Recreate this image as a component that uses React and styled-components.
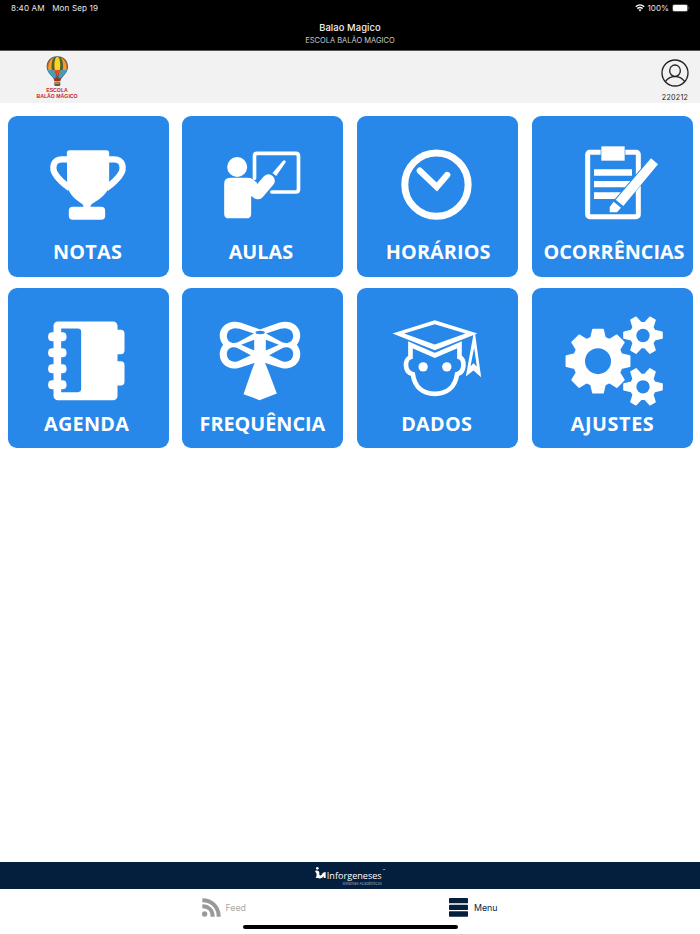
import styled, { createGlobalStyle } from "styled-components";

const BLUE = "#2788e9";
const NAVY = "#041e3e";

const gearPath = (cx, cy, teeth, outer, body, tip, base) => {
    const points = [];
    for (let i = 0; i < teeth; i++) {
        const a = (i * 2 * Math.PI) / teeth;
        [[body, -base], [outer, -tip], [outer, tip], [body, base]].forEach(([r, half]) => {
            const t = a + Math.asin(half / r);
            points.push(`${(cx + r * Math.cos(t)).toFixed(1)} ${(cy + r * Math.sin(t)).toFixed(1)}`);
        });
    }
    return "M" + points.join("L") + "Z";
};

const Trophy = () => (
    <>
        <path d="M199 130Q199 122 207 122H318Q326 122 326 130V232C314 262 289 272 274 283Q269 287 270 294H249Q250 287 245 283C228 271 212 262 200 232Z" />
        <rect x="205" y="291" width="109" height="39" rx="12" />
        <path className="line" strokeWidth="19" d="M205 149H184C157 149 152 178 167 197Q178 213 208 236" />
        <path className="line" strokeWidth="19" d="M320 149H341C368 149 373 178 358 197Q347 213 317 236" />
    </>
);

const Teacher = () => (
    <>
        <circle cx="188" cy="172" r="30" />
        <path d="M149 222Q149 204 167 204H218Q228 204 234 208L248 220L230 262V312Q230 326 216 326H163Q149 326 149 312Z" />
        <path className="line" strokeWidth="38" strokeLinejoin="round" strokeLinecap="round" d="M224 230L250 250L282 213" />
        <path className="line" strokeWidth="11" strokeLinecap="round" d="M240 206V139Q240 131 248 131H364Q372 131 372 139V239Q372 247 364 247H292" />
        <path d="M294 190L325 154Q330 150 333 154Q335 157 332 160L305 199Z" />
    </>
);

const Clock = () => (
    <>
        <circle className="line" strokeWidth="21" cx="260" cy="225" r="95" />
        <path className="line" strokeWidth="19" strokeLinecap="round" d="M210 183L261 232L292 196" />
    </>
);

const Clipboard = () => (
    <>
        <rect className="line" strokeWidth="15" x="188" y="128" width="152" height="193" rx="6" />
        <rect x="227" y="108" width="74" height="47" fill={BLUE} />
        <rect x="229" y="110" width="70" height="43" />
        <path d="M207 179H321V198H207ZM207 214H316V233H207ZM207 248H290V268H207Z" />
        <path d="M378 146L399 164L287 293L277 309L253 309L254 291Z" fill={BLUE} stroke={BLUE} strokeWidth="6" />
        <path d="M378 146L399 164L295 289L272 270Z" />
        <path d="M266 276L288 294L276 308H254V292Z" />
    </>
);

const Notebook = () => (
    <>
        <rect x="159" y="117" width="192" height="236" rx="13" />
        <path d="M340 142H361Q372 142 372 154V203Q372 215 361 215H340ZM340 236H361Q372 236 372 248V297Q372 309 361 309H340Z" />
        <path d="M182 138H232Q242 138 242 148V319Q242 329 232 329H182Z" fill={BLUE} />
        {[149, 197, 245, 293].map((y) => (
            <rect key={y} x="143" y={y} width="55" height="27" rx="12" />
        ))}
    </>
);

const Wings = () => (
    <>
        <path d="M257 141L200 121C150 104 118 152 146 187C118 223 150 272 200 254L257 236Z" />
        <path fill={BLUE} d="M238 153L195 139C171 132 157 145 157 161C158 177 173 186 190 179Z" />
        <path fill={BLUE} d="M200 187L239 172V204Z" />
        <path fill={BLUE} d="M229 218L190 197C172 190 157 199 157 214C157 231 171 242 190 236Z" />
    </>
);

const Dragonfly = () => (
    <>
        <Wings />
        <g transform="translate(513 0) scale(-1 1)">
            <Wings />
        </g>
        <path d="M243 235H269L280 262L307 333L255 353L207 335L233 260Z" />
        <ellipse cx="257" cy="150" rx="14" ry="5" fill={BLUE} />
    </>
);

const Graduate = () => (
    <>
        <path fillRule="evenodd" d="M128 153L255 113L383 153L255 203ZM163 153L255 186L347 153L255 125Z" />
        <path className="line" strokeWidth="14" d="M182 187L255 219L329 187V224C346 231 346 269 322 275C316 315 290 334 255 334C220 334 195 315 189 275C163 269 163 231 182 224Z" />
        <circle cx="220" cy="253" r="14" />
        <circle cx="291" cy="253" r="14" />
        <path fillRule="evenodd" d="M371 155H376L394 284L371 264L348 282ZM373 196L362 252L371 242L381 252Z" />
    </>
);

const Gears = () => (
    <>
        <path stroke="#fff" strokeWidth="5" strokeLinejoin="round" d={gearPath(219, 236, 8, 96, 73, 15, 21)} />
        <path stroke="#fff" strokeWidth="4" strokeLinejoin="round" d={gearPath(354, 158, 6, 58, 38, 9, 14)} />
        <path stroke="#fff" strokeWidth="4" strokeLinejoin="round" d={gearPath(354, 313, 6, 58, 38, 9, 14)} />
        <circle cx="219" cy="236" r="39" fill={BLUE} />
        <circle cx="354" cy="159" r="20" fill={BLUE} />
        <circle cx="354" cy="313" r="20" fill={BLUE} />
    </>
);

const menu = [
    { label: "NOTAS", Icon: Trophy, box: "22.5 19 483 366", spacing: 0.3, shift: -1 },
    { label: "AULAS", Icon: Teacher, box: "22.5 19 483 366", spacing: 0, shift: -4 },
    { label: "HORÁRIOS", Icon: Clock, box: "21.6 19 483 366", spacing: 0.1, shift: 1 },
    { label: "OCORRÊNCIAS", Icon: Clipboard, box: "21 19 483 366", spacing: 0, shift: 3 },
    { label: "AGENDA", Icon: Notebook, box: "22.5 16.5 483 366", spacing: 0.3, shift: -3 },
    { label: "FREQUÊNCIA", Icon: Dragonfly, box: "22.5 16.5 483 366", spacing: 0, shift: -1 },
    { label: "DADOS", Icon: Graduate, box: "21.6 16.5 483 366", spacing: 0.3, shift: -2 },
    { label: "AJUSTES", Icon: Gears, box: "21 16.5 483 366", spacing: 0.6, shift: 0 },
];

const Balloon = () => (
    <svg width="23" height="31" viewBox="0 0 69 93">
        <path d="M34 1C14 1 2 15 2 32C2 50 20 61 26 72H43C49 61 66 50 66 32C66 15 54 1 34 1Z" fill="#35606b" />
        <path d="M34 2C16 2 5 15 4 32L5 42H63L64 32C63 15 52 2 34 2Z" fill="#e2572b" />
        <path d="M18 8C9 16 6 28 7 42H17C15 28 18 14 24 4ZM50 8C59 16 62 28 61 42H51C53 28 50 14 44 4Z" fill="#e9a42a" />
        <path d="M24 4C17 14 16 28 18 42H26C24 28 25 12 30 2ZM44 4C51 14 52 28 50 42H42C44 28 43 12 38 2Z" fill="#3d6a35" />
        <path d="M34 2C25 5 24 28 27 42H41C44 28 43 5 34 2Z" fill="#f9d51f" />
        <path d="M5 42H26L30 70H26C21 60 9 54 5 42ZM63 42H42L38 70H42C47 60 59 54 63 42Z" fill="#3f9fc9" />
        <path d="M17 42H27L32 66ZM51 42H41L36 66Z" fill="#7c8c79" />
        <path d="M26 42H42L34 64Z" fill="#e8452e" />
        <path d="M23 67H45L43 76H25Z" fill="#a12d25" />
        <rect x="25" y="77" width="18" height="13" rx="4" fill="#5d5b3d" />
        <path d="M27 79H41V84H27Z" fill="#d08b32" />
    </svg>
);

const App = () => (
    <>
        <GlobalStyle />
        <Page>
            <TopBar>
                <StatusRow>
                    <span>8:40 AM</span>
                    <span>Mon Sep 19</span>
                    <StatusRight>
                        <svg width="10" height="8" viewBox="0 0 20 16" fill="none" stroke="#fff" strokeWidth="2.8">
                            <path d="M1.5 5.5Q10 -2 18.5 5.5M4.8 9.3Q10 4.8 15.2 9.3" />
                            <path d="M7 11.5Q10 9 13 11.5L10 15Z" fill="#fff" stroke="none" />
                        </svg>
                        <span>100%</span>
                        <svg width="18" height="8" viewBox="0 0 18 8">
                            <rect x="0.4" y="0.4" width="15.4" height="7.2" rx="2" fill="none" stroke="#777" strokeWidth="0.7" />
                            <rect x="1" y="1" width="14.2" height="6" rx="1.3" fill="#fff" />
                            <path d="M16.6 2.8Q18 4 16.6 5.2Z" fill="#888" />
                        </svg>
                    </StatusRight>
                </StatusRow>
                <Title>Balao Magico</Title>
                <Subtitle>ESCOLA BALÃO MAGICO</Subtitle>
            </TopBar>
            <SchoolBar>
                <SchoolLogo>
                    <Balloon />
                    <LogoText>ESCOLA</LogoText>
                    <LogoText>BALÃO MÁGICO</LogoText>
                </SchoolLogo>
                <Profile>
                    <svg width="28" height="28" viewBox="0 0 84 84" fill="none" stroke="#222" strokeWidth="4">
                        <circle cx="42" cy="42" r="39" />
                        <ellipse cx="42" cy="35" rx="16" ry="17" />
                        <path d="M13 68C20 57 30 53 42 53S64 57 71 68" />
                    </svg>
                    <span>220212</span>
                </Profile>
            </SchoolBar>
            <Grid>
                {menu.map(({ label, Icon, box, spacing, shift }) => (
                    <Tile key={label}>
                        <TileIcon viewBox={box}>
                            <Icon />
                        </TileIcon>
                        <TileLabel $spacing={spacing} $shift={shift}>{label}</TileLabel>
                    </Tile>
                ))}
            </Grid>
            <BrandBar>
                <svg width="11" height="12" viewBox="0 0 33 36">
                    <circle cx="7" cy="4" r="4" fill="#fff" />
                    <path d="M1 11C8 9 14 12 13 19C12 26 16 28 20 23C23 18 26 15 32 15V33H26V27C21 35 14 36 10 33H2C6 28 6 17 1 15Z" fill="#fff" />
                </svg>
                <BrandText>
                    <BrandName>Inforgeneses</BrandName>
                    <BrandTag>Sistemas Acadêmicos</BrandTag>
                </BrandText>
                <Trademark>™</Trademark>
            </BrandBar>
            <TabBar>
                <Tab $color="#a9a9a9" $gap={4.5}>
                    <svg width="19" height="19" viewBox="0 0 57 57" fill="none" stroke="#999" strokeWidth="12">
                        <circle cx="8" cy="48" r="8" fill="#999" stroke="none" />
                        <path d="M1 25C20 25 32 37 32 56M1 7C30 7 50 27 50 56" />
                    </svg>
                    Feed
                </Tab>
                <Tab $color={NAVY} $gap={6}>
                    <svg width="19" height="19" viewBox="0 0 57 57" fill={NAVY}>
                        <rect x="0" y="0" width="57" height="16" rx="2" />
                        <rect x="0" y="20" width="57" height="16" rx="2" />
                        <rect x="0" y="40" width="57" height="16" rx="2" />
                    </svg>
                    Menu
                </Tab>
            </TabBar>
            <HomeArea>
                <HomeIndicator />
            </HomeArea>
        </Page>
    </>
);

export default App;

const GlobalStyle = createGlobalStyle`
*{
    box-sizing: border-box;
}
body{
    margin: 0;
    background: #fff;
    font-family: Inter, "Liberation Sans", sans-serif;
}
svg{
    display: block;
    flex-shrink: 0;
}
`;

const Page = styled.div`
display: flex;
flex-direction: column;
width: 700px;
height: 934px;
overflow: hidden;
background: #fff;
`;

const TopBar = styled.header`
height: 51px;
background: #000;
color: #fff;
text-align: center;
border-bottom: 1px solid #555;
`;

const StatusRow = styled.div`
display: flex;
align-items: center;
gap: 7.5px;
height: 16px;
padding: 0 10px 0 11px;
font-size: 8.1px;
letter-spacing: 0.12px;
color: #e8e8e8;
`;

const StatusRight = styled.div`
display: flex;
align-items: center;
gap: 3px;
margin-left: auto;
letter-spacing: 0;
`;

const Title = styled.div`
margin-top: 6px;
font-size: 9.4px;
font-weight: 500;
line-height: 12px;
letter-spacing: 0.1px;
color: #f2f2f2;
`;

const Subtitle = styled.div`
margin-top: 1px;
font-size: 7.5px;
line-height: 11px;
color: #ccc;
`;

const SchoolBar = styled.div`
display: flex;
justify-content: space-between;
height: 52px;
padding: 5px 11px 0 34px;
background: #f2f2f2;
`;

const SchoolLogo = styled.div`
display: flex;
flex-direction: column;
align-items: center;
width: 46px;
`;

const LogoText = styled.div`
font-family: "Liberation Sans", sans-serif;
font-size: 5.2px;
font-weight: 700;
line-height: 6.2px;
color: #c3242b;
white-space: nowrap;
`;

const Profile = styled.div`
display: flex;
flex-direction: column;
align-items: center;
gap: 5.5px;
width: 28px;
padding-top: 3px;
font-size: 7.2px;
line-height: 10px;
letter-spacing: 0.25px;
color: #222;
`;

const Grid = styled.main`
display: grid;
grid-template-columns: repeat(4, 161px);
grid-auto-rows: 160.3px;
gap: 11px 13.8px;
flex: 1;
align-content: start;
padding: 13.3px 0 0 7.6px;
`;

const Tile = styled.div`
display: flex;
flex-direction: column;
align-items: center;
border-radius: 9px;
background: ${BLUE};
`;

const TileIcon = styled.svg`
width: 161px;
height: 122px;
fill: #fff;
.line{
    fill: none;
    stroke: #fff;
}
`;

const TileLabel = styled.div`
font-family: "Open Sans", "Noto Sans", sans-serif;
font-size: 19.8px;
font-weight: 700;
line-height: 27px;
color: #fff;
white-space: nowrap;
letter-spacing: ${({ $spacing }) => $spacing}px;
margin-left: ${({ $shift }) => $shift}px;
`;

const BrandBar = styled.div`
display: flex;
justify-content: center;
height: 27px;
padding-top: 5px;
background: ${NAVY};
color: #fff;
`;

const BrandText = styled.div`
display: flex;
flex-direction: column;
align-items: flex-end;
margin-left: 1px;
`;

const BrandName = styled.div`
font-family: "Open Sans", sans-serif;
font-size: 9.1px;
line-height: 14px;
padding-top: 1.5px;
`;

const BrandTag = styled.div`
margin-top: -1.5px;
font-size: 3.8px;
line-height: 5px;
color: #9aa9bc;
`;

const Trademark = styled.span`
margin-left: 1px;
font-size: 4px;
line-height: 8px;
`;

const TabBar = styled.nav`
display: flex;
height: 36px;
padding-left: 202px;
`;

const Tab = styled.div`
display: flex;
align-items: center;
gap: ${({ $gap }) => $gap}px;
width: 247px;
font-size: 8.8px;
color: ${({ $color }) => $color};
`;

const HomeArea = styled.div`
display: flex;
justify-content: center;
height: 9px;
`;

const HomeIndicator = styled.div`
width: 215px;
height: 4px;
border-radius: 2px;
background: #000;
`;
